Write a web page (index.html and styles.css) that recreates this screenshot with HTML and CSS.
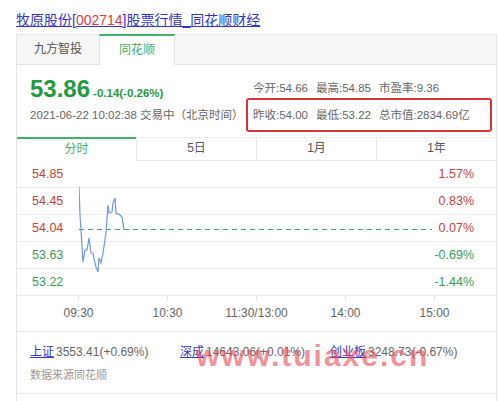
FILE: index.html
```html
<!DOCTYPE html>
<html lang="zh-CN">
<head>
<meta charset="utf-8">
<title>牧原股份</title>
<link rel="stylesheet" href="styles.css">
</head>
<body>
<h1 class="title"><a class="title-link" href="#">牧原股份[<span class="code">002714</span>]股票行情_同花顺财经</a></h1>
<div class="panel">
  <div class="tabbar">
    <div class="tab">九方智投</div>
    <div class="tab active">同花顺</div>
  </div>
  <div class="info">
    <div class="quote">
      <div class="price-line"><span class="price">53.86</span><span class="change">-0.14(-0.26%)</span></div>
      <div class="time">2021-06-22 10:02:38 交易中（北京时间）</div>
    </div>
    <div class="stats">
      <div class="stat-row"><span>今开:54.66</span><span>最高:54.85</span><span>市盈率:9.36</span></div>
      <div class="stat-row boxed"><span>昨收:54.00</span><span>最低:53.22</span><span>总市值:2834.69亿</span></div>
    </div>
  </div>
  <div class="periods">
    <div class="period active">分时</div>
    <div class="period">5日</div>
    <div class="period">1月</div>
    <div class="period">1年</div>
  </div>
  <div class="chart">
    <div class="row"><span class="up">54.85</span><span class="up">1.57%</span></div>
    <div class="row"><span class="up">54.45</span><span class="up">0.83%</span></div>
    <div class="row"><span class="up">54.04</span><span class="up">0.07%</span></div>
    <div class="row"><span class="down">53.63</span><span class="down">-0.69%</span></div>
    <div class="row"><span class="down">53.22</span><span class="down">-1.44%</span></div>
    <svg class="plot" viewBox="79 161 353 135" width="353" height="135">
      <line x1="79" y1="229.5" x2="432" y2="229.5" stroke="#3fae68" stroke-width="1.2" stroke-dasharray="5 4"/>
      <polyline fill="none" stroke="#6b98de" stroke-width="1.2" points="79,187 80,215 83,262 85,250 87,250 89,238 91,253 93,253 94,259 96,267 98,272 99,258 101,263 103,253 106,233 108,205 109,213 112,212 113,203 115,198 116,213 120,215 122,217 124,230"/>
    </svg>
  </div>
  <div class="axis">
    <span class="tick">09:30</span>
    <span class="tick">10:30</span>
    <span class="tick">11:30/13:00</span>
    <span class="tick">14:00</span>
    <span class="tick">15:00</span>
  </div>
  <div class="indexes">
    <div class="index-row">
      <div class="index"><a href="#">上证</a>3553.41(+0.69%)</div>
      <div class="index"><a href="#">深成</a>14643.06(+0.01%)</div>
      <div class="index"><a href="#">创业板</a>3248.73(-0.67%)</div>
    </div>
    <div class="source">数据来源同花顺</div>
  </div>
  <div class="more"></div>
</div>
<div class="watermark">www.tuiaxe.cn</div>
</body>
</html>
```
FILE: styles.css
```css
* { box-sizing: border-box; }
body {
  margin: 0;
  background: #fff;
  font-family: "Liberation Sans", "Noto Sans CJK SC", sans-serif;
  color: #666;
  width: 499px;
  height: 401px;
  overflow: hidden;
  position: relative;
}
.title {
  margin: 0;
  padding: 10px 0 0 16px;
  height: 34px;
  font-size: 14px;
  line-height: 20px;
  font-weight: normal;
}
.title-link { color: #3434c8; text-decoration: underline; }
.code { color: #e23a3a; }
.panel {
  margin-left: 16px;
  width: 481px;
  border-left: 1px solid #e6e6e6;
  border-right: 1px solid #e6e6e6;
}
.tabbar {
  display: flex;
  height: 31px;
  background: #f6f6f6;
  border-top: 1px solid #e8e8e8;
  border-bottom: 1px solid #e4e4e4;
}
.tab {
  width: 82px;
  font-size: 12px;
  line-height: 29px;
  text-align: center;
  color: #555;
}
.tab.active {
  width: 76px;
  margin-top: -1px;
  height: 31px;
  background: #fff;
  border-top: 2px solid #3fb56a;
  border-left: 1px solid #e4e4e4;
  border-right: 1px solid #e4e4e4;
  color: #46ae68;
  line-height: 28px;
}
.info {
  display: flex;
  height: 72px;
}
.quote {
  width: 229px;
  padding: 10px 0 0 13px;
}
.price-line {
  height: 28px;
  line-height: 28px;
  white-space: nowrap;
}
.price {
  font-size: 24px;
  font-weight: bold;
  color: #1f9a3e;
}
.change {
  margin-left: 3px;
  font-size: 11.5px;
  font-weight: bold;
  color: #1f9a3e;
}
.time {
  margin-top: 4px;
  font-size: 11.5px;
  line-height: 16px;
  color: #666;
  white-space: nowrap;
}
.stats {
  flex: 1;
  padding: 15px 4px 0 0;
}
.stat-row {
  display: flex;
  gap: 8px;
  height: 16px;
  font-size: 11.5px;
  line-height: 16px;
  color: #666;
  padding-left: 7px;
  white-space: nowrap;
}
.stat-row.boxed {
  margin-top: 2px;
  height: 34px;
  line-height: 30px;
  padding-left: 5px;
  border: 2px solid #d8333b;
  border-radius: 3px;
}
.periods {
  display: flex;
  height: 24px;
}
.period {
  flex: 1;
  font-size: 12px;
  line-height: 21px;
  text-align: center;
  color: #555;
  border-top: 1px solid #ededed;
  border-left: 1px solid #e8e8e8;
  border-bottom: 1px solid #e8e8e8;
}
.period.active {
  border-top: 2px solid #3fb56a;
  border-left: none;
  border-bottom: none;
  color: #46ae68;
}
.chart {
  position: relative;
}
.row {
  display: flex;
  justify-content: space-between;
  height: 27px;
  padding: 0 22px 0 15px;
  border-bottom: 1px solid #ececec;
  font-size: 12.5px;
  line-height: 26px;
}
.up { color: #c9403a; }
.down { color: #3a9a58; }
.plot {
  position: absolute;
  left: 62px;
  top: 0;
  display: block;
}
.axis {
  display: flex;
  height: 36px;
  padding-left: 17px;
  border-bottom: 1px solid #e8e8e8;
}
.tick {
  position: relative;
  width: 89px;
  flex: none;
  text-align: center;
  font-size: 12px;
  line-height: 34px;
  color: #666;
  white-space: nowrap;
}
.tick::before {
  content: "";
  position: absolute;
  left: 44px;
  top: 0;
  width: 1px;
  height: 5px;
  background: #e4e4e4;
}
.indexes {
  height: 62px;
  padding: 12px 0 0 13px;
  border-bottom: 1px solid #e8e8e8;
}
.index-row {
  display: flex;
  font-size: 12px;
  line-height: 16px;
  color: #666;
}
.index { width: 150px; flex: none; white-space: nowrap; }
.index a { color: #3434c8; text-decoration: underline; margin-right: 2px; }
.source {
  margin-top: 7px;
  font-size: 11px;
  line-height: 16px;
  color: #999;
}
.more { height: 20px; }
.watermark {
  position: absolute;
  left: 196px;
  top: 341px;
  font-size: 30px;
  line-height: 30px;
  font-weight: bold;
  letter-spacing: 2px;
  color: rgba(236, 70, 82, 0.6);
  white-space: nowrap;
  pointer-events: none;
}
```
